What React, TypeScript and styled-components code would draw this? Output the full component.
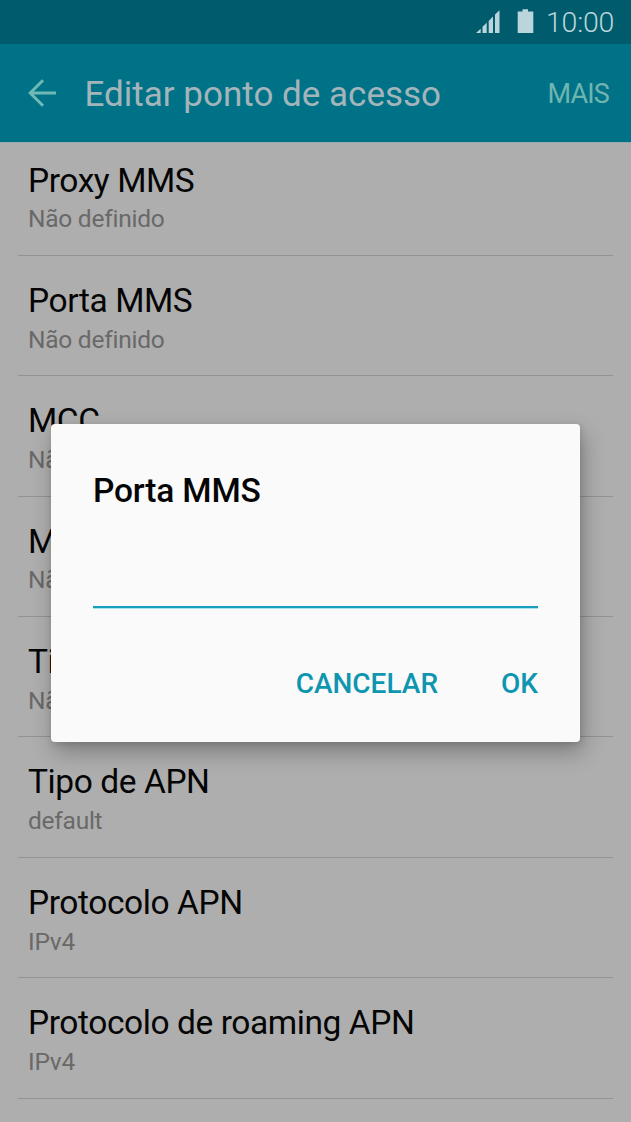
import React from 'react';
import styled, {createGlobalStyle} from "styled-components"

interface Setting {
    name: string;
    value: string;
}

const SETTINGS: Setting[] = [
    {name: "Proxy MMS", value: "Não definido"},
    {name: "Porta MMS", value: "Não definido"},
    {name: "MCC", value: "Não definido"},
    {name: "MNC", value: "Não definido"},
    {name: "Tipo autenticação", value: "Não definido"},
    {name: "Tipo de APN", value: "default"},
    {name: "Protocolo APN", value: "IPv4"},
    {name: "Protocolo de roaming APN", value: "IPv4"},
];

const GlobalStyle = createGlobalStyle`
    * {
        box-sizing: border-box;
    }

    body {
        margin: 0;
        background: #aeaeae;
        font-family: Roboto, "Liberation Sans", sans-serif;
    }

    button, input {
        font-family: inherit;
    }
`;

const Screen = styled.div`
    position: relative;
    display: flex;
    flex-direction: column;
    width: 631px;
    height: 1122px;
    overflow: hidden;
    background: #aeaeae;
`;

const StatusBar = styled.div`
    display: flex;
    flex: none;
    align-items: center;
    justify-content: flex-end;
    height: 44px;
    padding-right: 17px;
    background: #005b6d;
    color: #bad6dc;
`;

const SignalIcon = styled.svg`
    width: 24px;
    height: 24px;
    margin-right: 17px;
`;

const BatteryIcon = styled.svg`
    width: 17px;
    height: 26px;
    margin-right: 12px;
`;

const Clock = styled.span`
    padding-top: 1px;
    font-size: 28.5px;
    font-weight: 350;
    letter-spacing: -0.25px;
    line-height: 44px;
`;

const ActionBar = styled.header`
    display: flex;
    flex: none;
    align-items: center;
    height: 98px;
    padding: 0 22px 0 28px;
    background: #007287;
`;

const BackButton = styled.button`
    display: flex;
    padding: 0;
    margin-right: 27.5px;
    border: 0;
    background: none;
    color: #6fb9b6;
`;

const PageTitle = styled.h1`
    flex: 1;
    margin: 4px 0 0;
    color: #a3b5ba;
    font-size: 35px;
    font-weight: 400;
    line-height: 44px;
    white-space: nowrap;
`;

const MoreButton = styled.button`
    padding: 2px 0 0;
    border: 0;
    background: none;
    color: #6fb4b0;
    font-size: 27px;
    font-weight: 400;
    letter-spacing: -0.8px;
    line-height: 36px;
`;

const Viewport = styled.main`
    flex: 1;
    overflow: hidden;
    border-top: 1px solid #9aa9ac;
`;

// The list is scrolled up a little under the action bar
const List = styled.ul`
    margin: -7.5px 18px 0;
    padding: 0;
    list-style: none;
`;

const Row = styled.li`
    height: 120.4px;
    padding: 25px 10px 0;
    border-bottom: 1px solid #939393;
`;

const RowName = styled.div`
    color: #050505;
    font-size: 33.5px;
    letter-spacing: -0.42px;
    line-height: 40px;
    white-space: nowrap;
`;

const RowValue = styled.div`
    margin-top: 3.8px;
    color: #696969;
    font-size: 24.5px;
    letter-spacing: -0.25px;
    line-height: 30px;
`;

const Overlay = styled.div`
    position: absolute;
    inset: 0;
    display: flex;
    align-items: flex-start;
    justify-content: center;
    padding-top: 424px;
`;

const Dialog = styled.div`
    display: flex;
    flex-direction: column;
    width: 529px;
    height: 317.5px;
    padding: 47px 42px 0;
    border-radius: 4px;
    background: #fafafa;
    box-shadow: 3px 10px 22px rgba(0, 0, 0, 0.28), 1px 2px 6px rgba(0, 0, 0, 0.12);
`;

const DialogTitle = styled.h2`
    margin: 0;
    color: #050505;
    font-size: 33.5px;
    font-weight: 500;
    letter-spacing: -0.18px;
    line-height: 40px;
`;

const Field = styled.input`
    width: 100%;
    height: 59px;
    margin-top: 38px;
    padding: 0;
    border: 0;
    border-bottom: 2px solid #199fbd;
    border-radius: 0;
    box-shadow: 0 1px 0 #a8e4ee;
    outline: none;
    background: transparent;
    font-size: 30px;
`;

const Actions = styled.div`
    display: flex;
    justify-content: flex-end;
    gap: 63px;
    margin-top: 58px;
`;

const DialogButton = styled.button`
    padding: 0;
    border: 0;
    background: none;
    color: #0e96b0;
    font-size: 28px;
    font-weight: 500;
    line-height: 36px;
`;

const App: React.FC = () => {
    return (
        <Screen>
            <GlobalStyle/>
            <StatusBar>
                <SignalIcon viewBox={"0 0 24 24"} fill={"currentColor"}>
                    <path d={"M0 23 L4.7 18.7 V23Z M6.5 16.8 L10.7 12.8 V23 H6.5Z M12.7 11 L17 6.5 V23 H12.7Z M19 4.5 L23.5 .2 V23 H19Z"}/>
                </SignalIcon>
                <BatteryIcon viewBox={"0 0 17 26"} fill={"currentColor"}>
                    <path d={"M5.5 .2 H11 V2.5 H16.3 V24 H.7 V2.5 H5.5Z"}/>
                </BatteryIcon>
                <Clock>10:00</Clock>
            </StatusBar>
            <ActionBar>
                <BackButton aria-label={"Voltar"}>
                    <svg width={"29"} height={"28"} viewBox={"0 0 29 28"} fill={"none"} stroke={"currentColor"} strokeWidth={"3"}>
                        <path d={"M28 14 H2.5 M15 1.2 L2.2 14 L15 26.8"}/>
                    </svg>
                </BackButton>
                <PageTitle>Editar ponto de acesso</PageTitle>
                <MoreButton>MAIS</MoreButton>
            </ActionBar>
            <Viewport>
                <List>
                    {SETTINGS.map(setting => (
                        <Row key={setting.name}>
                            <RowName>{setting.name}</RowName>
                            <RowValue>{setting.value}</RowValue>
                        </Row>
                    ))}
                </List>
            </Viewport>
            <Overlay>
                <Dialog role={"dialog"}>
                    <DialogTitle>Porta MMS</DialogTitle>
                    <Field type={"text"} aria-label={"Porta MMS"}/>
                    <Actions>
                        <DialogButton>CANCELAR</DialogButton>
                        <DialogButton>OK</DialogButton>
                    </Actions>
                </Dialog>
            </Overlay>
        </Screen>
    );
};

export default App;
